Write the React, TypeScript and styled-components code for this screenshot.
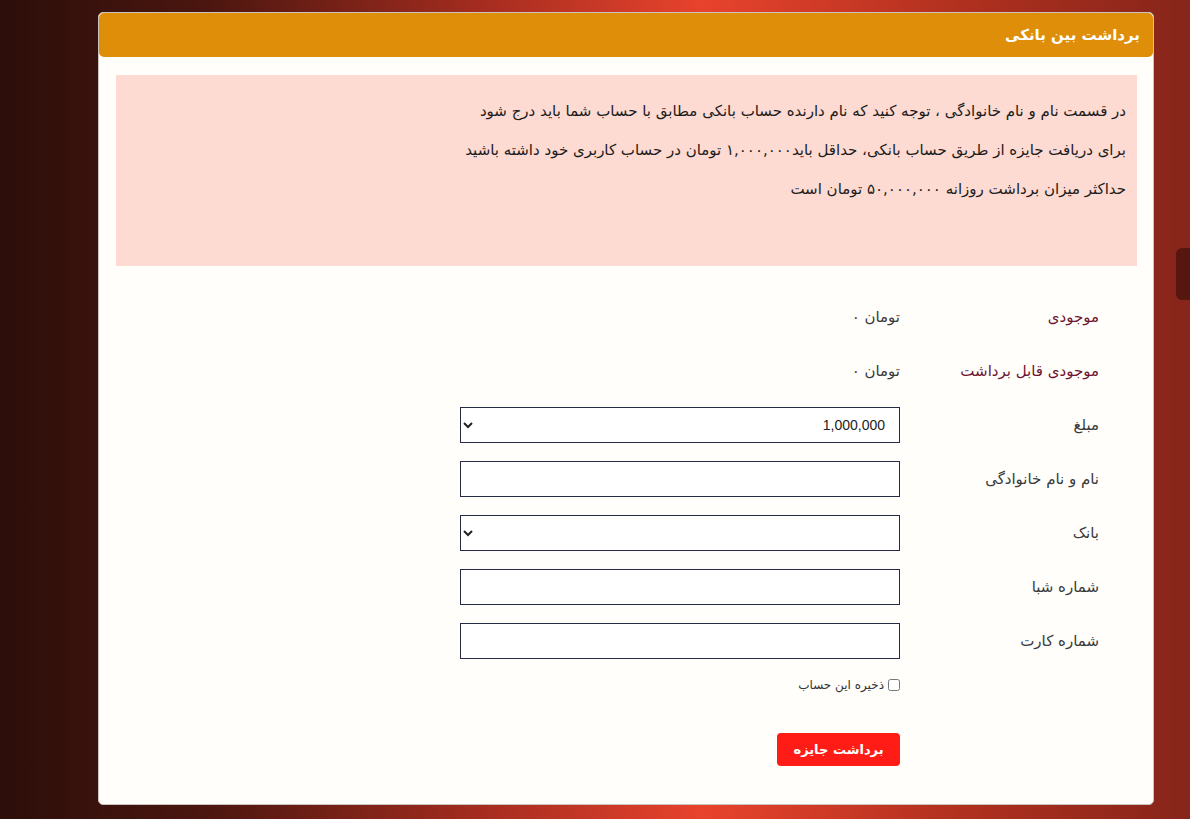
import React from 'react';
import styled, { createGlobalStyle } from 'styled-components';

const GlobalStyle = createGlobalStyle`
  html, body {
    margin: 0;
    padding: 0;
    min-height: 100%;
  }
  body {
    font-family: "DejaVu Sans", "Noto Sans", sans-serif;
    background: linear-gradient(90deg, #2c0e0a 0%, #4a160f 17%, #a32c1f 40%, #e8432d 59%, #b2311f 80%, #86251a 100%);
    min-height: 819px;
  }
`;

const Page = styled.div`
  padding: 12px 0 14px 98px;
  min-height: 819px;
  box-sizing: border-box;
`;

const Card = styled.section`
  width: 1056px;
  box-sizing: border-box;
  background: #fffefb;
  border: 1px solid #c9c4c0;
  border-radius: 5px;
  direction: rtl;
`;

const CardHeader = styled.header`
  height: 44px;
  display: flex;
  align-items: center;
  padding: 0 13px;
  background: #de8e09;
  border-radius: 5px;
  color: #fff;
  font-size: 15px;
  font-weight: bold;
`;

const CardBody = styled.div`
  padding: 18px 16px 38px 17px;
`;

const Alert = styled.div`
  background: #fddad2;
  color: #1c1c1c;
  padding: 17px 11px 57px;
  font-size: 15px;
  line-height: 39px;
`;

const Form = styled.form`
  padding: 33px 38px 0 0;
  display: flex;
  flex-direction: column;
  gap: 18px;
`;

const Row = styled.div`
  display: grid;
  grid-template-columns: 199px 440px;
  align-items: center;
  min-height: 36px;
`;

const Label = styled.label<{ $accent?: boolean }>`
  font-size: 15px;
  color: ${({ $accent }) => ($accent ? '#6e1430' : '#3a3a3a')};
`;

const Value = styled.span`
  font-size: 15px;
  color: #3a3a3a;
`;

const Input = styled.input`
  height: 36px;
  box-sizing: border-box;
  border: 1px solid #262a45;
  border-radius: 0;
  background: #fff;
  font-family: "Liberation Sans", sans-serif;
  font-size: 14px;
  padding: 0 10px;
`;

const Select = styled.select`
  height: 36px;
  box-sizing: border-box;
  border: 1px solid #262a45;
  border-radius: 0;
  background: #fff;
  color: #222;
  font-family: "Liberation Sans", sans-serif;
  font-size: 14px;
  padding: 0 10px 0 4px;
`;

const CheckRow = styled.label`
  display: flex;
  align-items: center;
  gap: 4px;
  margin: 1px 199px 0 0;
  font-size: 12px;
  color: #333;
`;

const Check = styled.input`
  width: 12px;
  height: 12px;
  margin: 0;
`;

const SubmitButton = styled.button`
  margin: 23px 199px 0 0;
  align-self: flex-start;
  width: 123px;
  height: 33px;
  border: none;
  border-radius: 4px;
  background: #ff1c16;
  color: #fff;
  font-family: "DejaVu Sans", sans-serif;
  font-size: 13px;
  font-weight: bold;
`;

const SideTab = styled.div`
  position: fixed;
  right: 0;
  top: 248px;
  width: 14px;
  height: 52px;
  border-radius: 6px 0 0 6px;
  background: #571710;
`;

const App: React.FC = () => {
  return (
    <>
      <GlobalStyle />
      <Page>
        <Card>
          <CardHeader>برداشت بین بانکی</CardHeader>
          <CardBody>
            <Alert>
              <div>در قسمت نام و نام خانوادگی ، توجه کنید که نام دارنده حساب بانکی مطابق با حساب شما باید درج شود</div>
              <div>برای دریافت جایزه از طریق حساب بانکی، حداقل باید۱,۰۰۰,۰۰۰ تومان در حساب کاربری خود داشته باشید</div>
              <div>حداکثر میزان برداشت روزانه ۵۰,۰۰۰,۰۰۰ تومان است</div>
            </Alert>
            <Form onSubmit={(e) => e.preventDefault()}>
              <Row>
                <Label $accent>موجودی</Label>
                <Value>تومان ۰</Value>
              </Row>
              <Row>
                <Label $accent>موجودی قابل برداشت</Label>
                <Value>تومان ۰</Value>
              </Row>
              <Row>
                <Label>مبلغ</Label>
                <Select defaultValue="1000000">
                  <option value="1000000">1,000,000</option>
                  <option value="2000000">2,000,000</option>
                  <option value="5000000">5,000,000</option>
                </Select>
              </Row>
              <Row>
                <Label>نام و نام خانوادگی</Label>
                <Input type="text" />
              </Row>
              <Row>
                <Label>بانک</Label>
                <Select defaultValue="">
                  <option value=""></option>
                </Select>
              </Row>
              <Row>
                <Label>شماره شبا</Label>
                <Input type="text" />
              </Row>
              <Row>
                <Label>شماره کارت</Label>
                <Input type="text" />
              </Row>
              <CheckRow>
                <Check type="checkbox" />
                ذخیره این حساب
              </CheckRow>
              <SubmitButton type="submit">برداشت جایزه</SubmitButton>
            </Form>
          </CardBody>
        </Card>
      </Page>
      <SideTab />
    </>
  );
};

export default App;
